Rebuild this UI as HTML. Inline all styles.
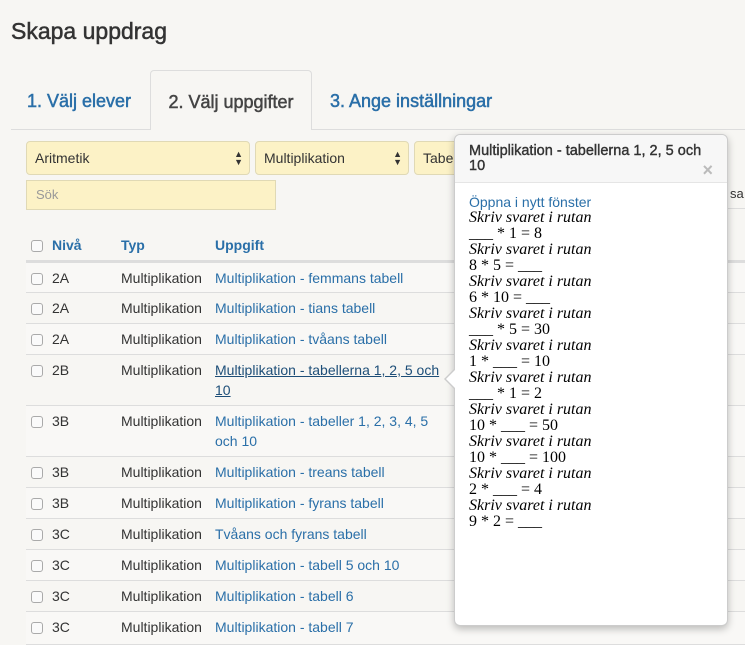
<!DOCTYPE html>
<html><head><meta charset="utf-8"><style>
*{box-sizing:border-box;margin:0;padding:0}
body{width:745px;height:645px;overflow:hidden;background:#f7f6f3;font-family:"Liberation Sans",sans-serif;color:#333;position:relative}
.a{position:absolute}
h1{position:absolute;left:11px;top:18px;font-size:23px;font-weight:normal;color:#333;-webkit-text-stroke:.5px #333}
.tabline{left:11px;top:129px;width:734px;height:1px;background:#ddd}
.tab{top:70px;height:60px;font-size:18px;line-height:62px;color:#2a6fa8;-webkit-text-stroke:.5px #2a6fa8}
.act{left:150px;width:162px;background:#f7f6f3;border:1px solid #ddd;border-bottom:none;border-radius:4px 4px 0 0;color:#444;-webkit-text-stroke:.5px #444;text-align:center}
.sel{top:141px;height:34px;background:#fcf2c6;border:1px solid #e0d9b5;border-radius:4px;font-size:14px;line-height:32px;padding-left:8px;color:#333}
.sel i{position:absolute;right:6px;top:0;font-style:normal;font-size:9px;line-height:8px;padding-top:8px;color:#333}
.srch{left:26px;top:180px;width:250px;height:30px;background:#fcf2c6;border:1px solid #e0d9b5;font-size:13px;line-height:28px;padding-left:9px;color:#999}
.th{top:237px;font-size:14px;font-weight:bold;color:#2a6fa8}
.row{left:26px;width:719px;border-top:1px solid #ddd;font-size:14px;line-height:20px}
.row span{position:absolute;top:5px}
.cb{position:absolute;left:5px;width:12px;height:12px;border:1px solid #aaa;border-radius:3px;background:#fafafa}
.lnk{color:#2a6fa8}
.pop{left:454px;top:134px;width:274px;height:492px;background:#fff;border:1px solid #ccc;border-radius:6px;box-shadow:0 3px 8px rgba(0,0,0,.25)}
.ph{height:48px;background:#f7f7f7;border-bottom:1px solid #e5e5e5;border-radius:6px 6px 0 0;padding:9px 14px;font-size:14.5px;line-height:15px;color:#333;-webkit-text-stroke:.4px #333}
.pb{padding:11px 14px;font-family:"Liberation Serif",serif;font-size:16px;line-height:16px;color:#000}
.pb em{display:block}
</style></head><body>
<h1>Skapa uppdrag</h1>
<div class="a tabline"></div>
<div class="a tab" style="left:27px">1. Välj elever</div>
<div class="a tab act">2. Välj uppgifter</div>
<div class="a tab" style="left:330px">3. Ange inställningar</div>
<div class="a sel" style="left:26px;width:224px">Aritmetik<i>▲<br>▼</i></div>
<div class="a sel" style="left:255px;width:154px">Multiplikation<i>▲<br>▼</i></div>
<div class="a sel" style="left:414px;width:60px">Tabe</div>
<div class="a srch">Sök</div>
<div class="a" style="left:730px;top:186px;font-size:13px;white-space:nowrap">sa 1</div>
<div class="a" style="left:700px;top:208px;width:45px;height:1px;background:#ddd"></div>
<div class="a cb" style="left:31px;top:240px"></div>
<div class="a th" style="left:52px">Nivå</div>
<div class="a th" style="left:121px">Typ</div>
<div class="a th" style="left:215px">Uppgift</div>
<div class="a" style="left:26px;top:260px;width:719px;height:2px;background:#ddd"></div>

<div class="a row" style="top:262px;height:31px;background:#f9f8f6"><div class="cb" style="top:10px"></div><span style="left:26px">2A</span><span style="left:95px">Multiplikation</span><span class="lnk" style="left:189px">Multiplikation - femmans tabell</span></div>
<div class="a row" style="top:292px;height:31px"><div class="cb" style="top:10px"></div><span style="left:26px">2A</span><span style="left:95px">Multiplikation</span><span class="lnk" style="left:189px">Multiplikation - tians tabell</span></div>
<div class="a row" style="top:323px;height:31px;background:#f9f8f6"><div class="cb" style="top:10px"></div><span style="left:26px">2A</span><span style="left:95px">Multiplikation</span><span class="lnk" style="left:189px">Multiplikation - tvåans tabell</span></div>
<div class="a row" style="top:354px;height:51px"><div class="cb" style="top:10px"></div><span style="left:26px">2B</span><span style="left:95px">Multiplikation</span><span style="left:189px;color:#1d4e78;text-decoration:underline">Multiplikation - tabellerna 1, 2, 5 och<br>10</span></div>
<div class="a row" style="top:405px;height:51px;background:#f9f8f6"><div class="cb" style="top:10px"></div><span style="left:26px">3B</span><span style="left:95px">Multiplikation</span><span class="lnk" style="left:189px">Multiplikation - tabeller 1, 2, 3, 4, 5<br>och 10</span></div>
<div class="a row" style="top:456px;height:31px"><div class="cb" style="top:10px"></div><span style="left:26px">3B</span><span style="left:95px">Multiplikation</span><span class="lnk" style="left:189px">Multiplikation - treans tabell</span></div>
<div class="a row" style="top:487px;height:31px;background:#f9f8f6"><div class="cb" style="top:10px"></div><span style="left:26px">3B</span><span style="left:95px">Multiplikation</span><span class="lnk" style="left:189px">Multiplikation - fyrans tabell</span></div>
<div class="a row" style="top:518px;height:31px"><div class="cb" style="top:10px"></div><span style="left:26px">3C</span><span style="left:95px">Multiplikation</span><span class="lnk" style="left:189px">Tvåans och fyrans tabell</span></div>
<div class="a row" style="top:549px;height:31px;background:#f9f8f6"><div class="cb" style="top:10px"></div><span style="left:26px">3C</span><span style="left:95px">Multiplikation</span><span class="lnk" style="left:189px">Multiplikation - tabell 5 och 10</span></div>
<div class="a row" style="top:580px;height:31px"><div class="cb" style="top:10px"></div><span style="left:26px">3C</span><span style="left:95px">Multiplikation</span><span class="lnk" style="left:189px">Multiplikation - tabell 6</span></div>
<div class="a row" style="top:611px;height:34px;background:#f9f8f6;border-bottom:1px solid #ddd"><div class="cb" style="top:10px"></div><span style="left:26px">3C</span><span style="left:95px">Multiplikation</span><span class="lnk" style="left:189px">Multiplikation - tabell 7</span></div>

<div class="a pop">
<div class="ph"><div style="width:250px">Multiplikation - tabellerna 1, 2, 5 och 10</div><span style="position:absolute;right:14px;top:28px;color:#bbb;font-size:18px;font-weight:bold;-webkit-text-stroke:0">×</span></div>
<div class="pb">
<div style="font-family:'Liberation Sans',sans-serif;font-size:14px;color:#2a6fa8;line-height:16px">Öppna i nytt fönster</div>
<em>Skriv svaret i rutan</em>___ * 1 = 8
<em>Skriv svaret i rutan</em>8 * 5 = ___
<em>Skriv svaret i rutan</em>6 * 10 = ___
<em>Skriv svaret i rutan</em>___ * 5 = 30
<em>Skriv svaret i rutan</em>1 * ___ = 10
<em>Skriv svaret i rutan</em>___ * 1 = 2
<em>Skriv svaret i rutan</em>10 * ___ = 50
<em>Skriv svaret i rutan</em>10 * ___ = 100
<em>Skriv svaret i rutan</em>2 * ___ = 4
<em>Skriv svaret i rutan</em>9 * 2 = ___
</div>
</div>
<div class="a" style="left:444px;top:368px;width:0;height:0;border-top:11px solid transparent;border-bottom:11px solid transparent;border-right:11px solid #ccc"></div>
<div class="a" style="left:446px;top:369px;width:0;height:0;border-top:10px solid transparent;border-bottom:10px solid transparent;border-right:10px solid #fff"></div>
</body></html>
